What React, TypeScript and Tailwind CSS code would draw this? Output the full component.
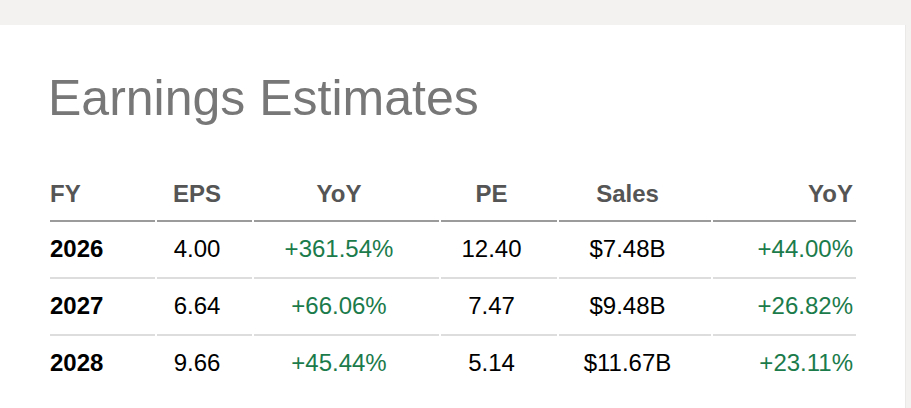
const rows = [
  { fy: "2026", eps: "4.00", epsYoy: "+361.54%", pe: "12.40", sales: "$7.48B", salesYoy: "+44.00%" },
  { fy: "2027", eps: "6.64", epsYoy: "+66.06%", pe: "7.47", sales: "$9.48B", salesYoy: "+26.82%" },
  { fy: "2028", eps: "9.66", epsYoy: "+45.44%", pe: "5.14", sales: "$11.67B", salesYoy: "+23.11%" },
];

const EarningsEstimates = () => {
  const head = "pb-[12px] leading-7 font-bold text-[#555] border-b-2 border-[#9b9b9b]";
  return (
    <div className="min-h-screen bg-[#f4f1f1] pt-[25px] pr-[5px]" style={{ fontFamily: '"Liberation Sans", Arial, sans-serif' }}>
      <div className="min-h-[383px] bg-white pt-[45px] pl-[48px] border-r border-[#ebe8e8]">
        <h2 className="text-[50px] leading-[56px] text-[#777]">Earnings Estimates</h2>
        <div className="mt-[54px] grid grid-cols-[105px_95px_185px_116px_152px_143px] gap-x-[2px] text-[24px] ml-[2px]">
          <div className={`${head} text-left`}>FY</div>
          <div className={`${head} text-center pr-[15px]`}>EPS</div>
          <div className={`${head} text-center pr-[15px]`}>YoY</div>
          <div className={`${head} text-center pr-[15px]`}>PE</div>
          <div className={`${head} text-center pr-[15px]`}>Sales</div>
          <div className={`${head} text-right pr-[3px]`}>YoY</div>
          {rows.map((r, i) => {
            const cell = `pt-[13px] pb-[14px] leading-7 ${i < rows.length - 1 ? "border-b-2 border-[#dddddd]" : ""}`;
            return (
              <div key={r.fy} className="contents">
                <div className={`${cell} font-bold text-black`}>{r.fy}</div>
                <div className={`${cell} text-center pr-[15px] text-black`}>{r.eps}</div>
                <div className={`${cell} text-center pr-[15px] text-[#1b7b4b]`}>{r.epsYoy}</div>
                <div className={`${cell} text-center pr-[15px] text-black`}>{r.pe}</div>
                <div className={`${cell} text-center pr-[15px] text-black`}>{r.sales}</div>
                <div className={`${cell} text-right pr-[3px] text-[#1b7b4b]`}>{r.salesYoy}</div>
              </div>
            );
          })}
        </div>
      </div>
    </div>
  );
};

export default function App() {
  return <EarningsEstimates />;
}
